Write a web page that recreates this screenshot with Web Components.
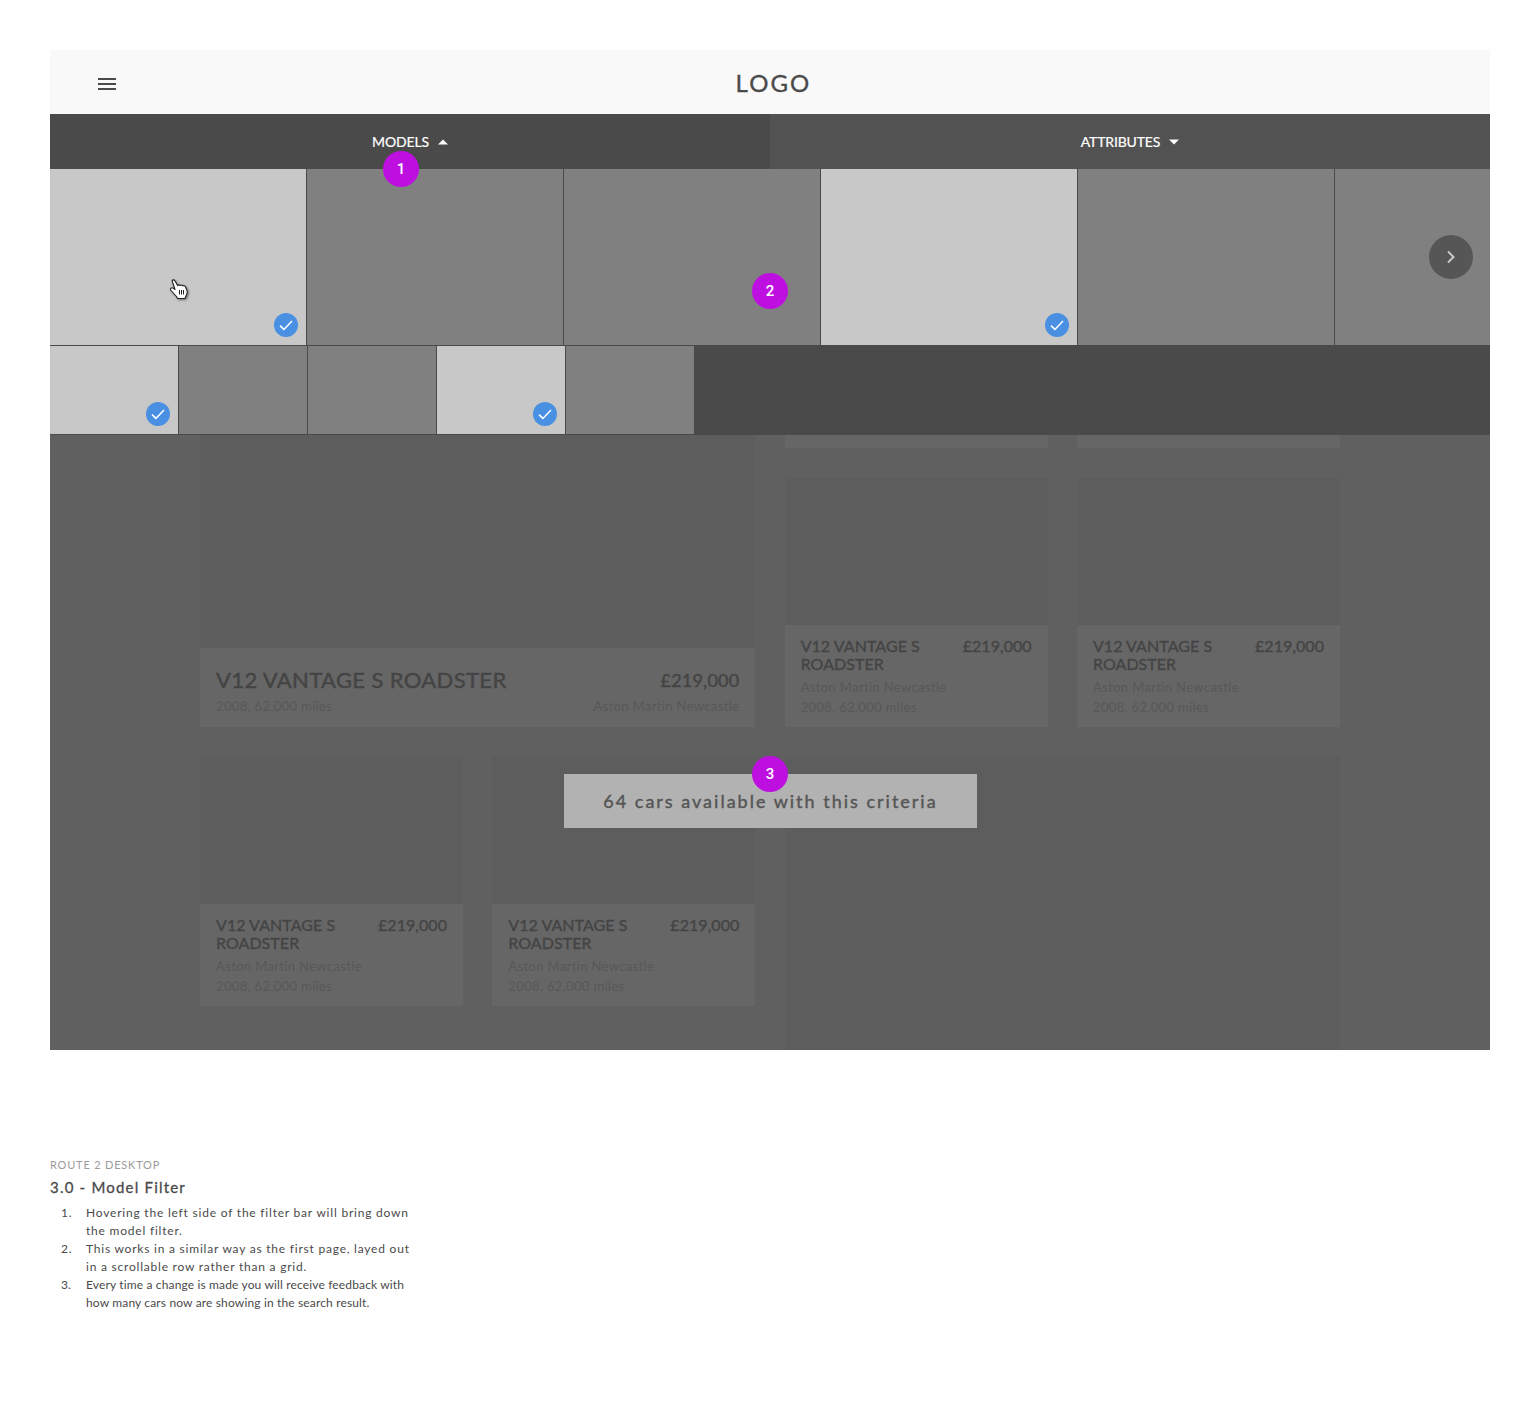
<!DOCTYPE html>
<html lang="en">
<head>
<meta charset="utf-8">
<title>3.0 - Model Filter</title>
<style>
  html, body { margin: 0; background: #fff; }
  body { padding: 50px; font-family: Lato, "Open Sans", sans-serif; }
</style>
</head>
<body>
<wire-frame>
  <site-header></site-header>
  <filter-bar></filter-bar>
  <model-row>
    <model-tile selected><hand-cursor></hand-cursor></model-tile>
    <model-tile></model-tile>
    <model-tile></model-tile>
    <model-tile selected></model-tile>
    <model-tile></model-tile>
    <model-tile></model-tile>
    <next-button></next-button>
  </model-row>
  <variant-row>
    <model-tile selected small></model-tile>
    <model-tile small></model-tile>
    <model-tile small></model-tile>
    <model-tile selected small></model-tile>
    <model-tile small></model-tile>
  </variant-row>
  <car-results>
    <car-card big></car-card>
    <car-stub></car-stub>
    <car-stub></car-stub>
    <car-card></car-card>
    <car-card></car-card>
    <car-card></car-card>
    <car-card></car-card>
    <car-stub tall></car-stub>
  </car-results>
  <step-badge n="1" style="left: 333px; top: 101px"></step-badge>
  <step-badge n="2" style="left: 702px; top: 223px"></step-badge>
  <step-badge n="3" style="left: 702px; top: 706px"></step-badge>
</wire-frame>
<page-notes>
  <span slot="route">ROUTE 2 DESKTOP</span>
  <span slot="title">3.0 - Model Filter</span>
  <note-item n="1" style="letter-spacing: .79px">Hovering the left side of the filter bar will bring down the model filter.</note-item>
  <note-item n="2" style="letter-spacing: .78px">This works in a similar way as the first page, layed out in a scrollable row rather than a grid.</note-item>
  <note-item n="3" style="letter-spacing: .15px">Every time a change is made you will receive feedback with how many cars now are showing in the search result.</note-item>
</page-notes>

<script>
const caret = up => `<svg width="10" height="6" viewBox="0 0 10 6"><path d="${up ? 'M0 5.5 L5 .5 L10 5.5Z' : 'M0 .5 L10 .5 L5 5.5Z'}" fill="#fff"/></svg>`;

function define(name, css, html) {
  customElements.define(name, class extends HTMLElement {
    connectedCallback() {
      if (this.shadowRoot) return;
      this.attachShadow({ mode: 'open' });
      this.shadowRoot.innerHTML = `<style>${css}</style>${typeof html === 'function' ? html(this) : html}`;
    }
  });
}

define('wire-frame', `
  :host { display: block; position: relative; width: 1440px; height: 1000px; }
`, `<slot></slot>`);

define('site-header', `
  :host { display: flex; align-items: center; justify-content: center; position: relative; height: 64px; background: #f9f9f9; }
  .menu { position: absolute; left: 48px; top: 28px; width: 18px; height: 12px; display: flex; flex-direction: column; justify-content: space-between; }
  .menu i { display: block; height: 2px; background: #4a4a4a; }
  .logo { font-size: 24px; letter-spacing: 2.1px; color: #4a4a4a; -webkit-text-stroke: .35px #4a4a4a; margin: 1px 0 0 7px; line-height: 64px; }
`, `<div class="menu"><i></i><i></i><i></i></div><div class="logo">LOGO</div>`);

define('filter-bar', `
  :host { display: flex; height: 55px; }
  div { flex: 1; display: flex; align-items: center; justify-content: center; gap: 9px; color: #fff; font-size: 14px; letter-spacing: -.15px; -webkit-text-stroke: .2px #fff; }
  .open { background: #4a4a4a; }
  .closed { background: #525252; }
  svg { display: block; }
`, `<div class="open">MODELS ${caret(true)}</div><div class="closed">ATTRIBUTES ${caret(false)}</div>`);

define('model-row', `
  :host { display: flex; height: 176px; background: #808080; overflow: hidden; position: relative; }
`, `<slot></slot>`);

define('variant-row', `
  :host { display: flex; height: 90px; background: #4a4a4a; box-sizing: border-box; padding: 1px 0; }
`, `<slot></slot>`);

define('model-tile', `
  :host { display: block; position: relative; flex: 0 0 257px; box-sizing: border-box; background: #808080; border-right: 1px solid #4a4a4a; }
  :host([small]) { flex-basis: 129px; }
  :host([selected]) { background: #c8c8c8; }
  .tick { display: none; position: absolute; right: 8px; bottom: 8px; width: 24px; height: 24px; border-radius: 50%; background: #4a90e2; }
  :host([selected]) .tick { display: block; }
  svg { display: block; }
`, `<slot></slot><div class="tick"><svg width="24" height="24" viewBox="0 0 24 24"><path d="M6 12.6 L9.9 16.4 L18 8" fill="none" stroke="#fff" stroke-width="1.5"/></svg></div>`);

define('hand-cursor', `
  :host { position: absolute; left: 120px; top: 110px; display: block; width: 19px; height: 21px; filter: drop-shadow(1px 1px 1px rgba(0,0,0,.45)); }
  svg { display: block; }
`, `<svg width="19" height="21" viewBox="0 0 19 21"><path d="M2.1 1.7C2.7.6 4.3.5 4.9 1.7L7.6 6.6C8.4 5.7 9.6 5.7 10.2 6.5 11 5.7 12.4 5.9 12.8 6.9 13.8 6.3 15 6.7 15.4 7.8L17 11.5C17.6 13.5 17 15.5 15.8 17.4L15 19.5H7.5L6.5 17.5 1 11.5C.2 10.4.5 9.3 1.4 8.9 2.4 8.5 3.3 8.9 5 10.5Z" fill="#fff" stroke="#222" stroke-width="1.1" stroke-linejoin="round"/><path d="M9.5 11v4.5M11.5 11v4.5M13.5 11v4.5" stroke="#222" fill="none"/></svg>`);

define('next-button', `
  :host { position: absolute; right: 17px; top: 66px; display: flex; align-items: center; justify-content: center; width: 44px; height: 44px; border-radius: 50%; background: #565656; }
  svg { display: block; margin-top: -1px; }
`, `<svg width="10" height="14" viewBox="0 0 10 14"><path d="M2 1.5 L7.5 7 L2 12.5" fill="none" stroke="#c8c8c8" stroke-width="2"/></svg>`);

define('car-results', `
  :host { display: block; position: relative; height: 615px; background: #606060; overflow: hidden; }
  .grid { display: grid; grid-template-columns: repeat(4, 263px); column-gap: 29.33px; grid-template-rows: 13px 249px 249px 14px; row-gap: 30px; margin: 0 150px; }
  .toast { position: absolute; left: 514px; top: 339px; width: 413px; height: 54px; display: flex; align-items: center; justify-content: center; background: #b2b2b2; color: #555; font-size: 18px; -webkit-text-stroke: .4px #555; letter-spacing: 2px; }
`, `<div class="grid"><slot></slot></div>
  <div class="toast">64 cars available with this criteria</div>`);

define('car-stub', `
  :host { display: block; background: #666; }
  :host([tall]) { grid-column: span 2; grid-row: span 2; background: #5d5d5d; }
`, ``);

define('car-card', `
  :host { display: flex; flex-direction: column; min-width: 0; color: #444; }
  :host([big]) { grid-column: span 2; grid-row: span 2; }
  .pic { flex: 1; background: #5d5d5d; }
  .info { height: 102px; box-sizing: border-box; padding: 12px 16px 0; background: #666; }
  .top { display: flex; justify-content: space-between; gap: 16px; font-size: 16px; line-height: 18px; -webkit-text-stroke: .35px #444; letter-spacing: .05px; }
  .name { width: 130px; }
  .sub { font-size: 13px; line-height: 20px; color: #585858; letter-spacing: .36px; }
  .dealer { margin-top: 4px; }
  :host([big]) .info { height: 79px; padding: 17px 16px 0 16px; }
  :host([big]) .top { align-items: center; font-size: 22px; line-height: 30px; letter-spacing: .37px; -webkit-text-stroke: .45px #444; }
  :host([big]) .name { width: auto; }
  :host([big]) .price { font-size: 18px; letter-spacing: .2px; }
  :host([big]) .bottom { display: flex; justify-content: space-between; flex-direction: row-reverse; margin-top: 1px; }
`, el => el.hasAttribute('big') ? `<div class="pic"></div><div class="info">
    <div class="top"><div class="name">V12 VANTAGE S ROADSTER</div><div class="price">£219,000</div></div>
    <div class="sub bottom"><span>Aston Martin Newcastle</span><span>2008, 62,000 miles</span></div>
  </div>` : `<div class="pic"></div><div class="info">
    <div class="top"><div class="name">V12 VANTAGE S ROADSTER</div><div class="price">£219,000</div></div>
    <div class="sub dealer">Aston Martin Newcastle</div>
    <div class="sub">2008, 62,000 miles</div>
  </div>`);

define('step-badge', `
  :host { position: absolute; display: flex; align-items: center; justify-content: center; width: 36px; height: 36px; border-radius: 50%; background: #bd10e0; color: #fff; font-family: Roboto, sans-serif; font-size: 15px; font-weight: 500; z-index: 2; }
  span { margin-top: -1px; }
`, el => `<span>${el.getAttribute('n')}</span>`);

define('page-notes', `
  :host { display: block; width: 366px; margin-top: 107px; color: #4a4a4a; }
  .route { display: block; font-size: 11px; line-height: 16px; letter-spacing: .8px; color: #9b9b9b; }
  .title { display: block; margin-top: 4px; font-size: 15px; line-height: 20px; -webkit-text-stroke: .3px #4a4a4a; letter-spacing: 1.2px; }
  .list { margin-top: 7px; font-size: 12px; line-height: 18px; }
`, `<span class="route"><slot name="route"></slot></span><span class="title"><slot name="title"></slot></span><div class="list"><slot></slot></div>`);

define('note-item', `
  :host { display: grid; grid-template-columns: 25px 1fr; padding-left: 11px; }
`, el => `<span>${el.getAttribute('n')}.</span><span><slot></slot></span>`);
</script>
</body>
</html>
